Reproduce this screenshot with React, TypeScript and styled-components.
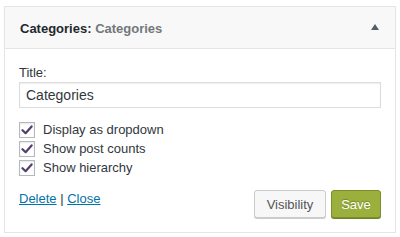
import {FC} from "react";
import styled, {createGlobalStyle} from "styled-components";

const GlobalStyle = createGlobalStyle`
	body {
		margin: 0;
		background: #ffffff;
		font-family: "Liberation Sans", Arial, sans-serif;
		color: #32373c;
	}
`;

const Widget = styled.div`
	box-sizing: border-box;
	width: 392px;
	height: 227px;
	margin: 6px 0 0 4px;
	border: 1px solid #e5e5e5;
	background: #ffffff;
	box-shadow: 0 1px 1px rgba(0, 0, 0, 0.04);
	display: flex;
	flex-direction: column;
`;

const Header = styled.div`
	height: 41px;
	border-bottom: 1px solid #e5e5e5;
	background: #f8f8f8;
	display: flex;
	align-items: center;
	justify-content: space-between;
	padding: 0 16px 0 15px;
`;

const HeaderTitle = styled.h3`
	margin: 0;
	font-size: 13px;
	font-weight: 700;
	color: #23282d;
	padding-top: 1px;

	span {
		color: #72777c;
		font-weight: 700;
	}
`;

const Toggle = styled.span`
	width: 0;
	height: 0;
	border-left: 4px solid transparent;
	border-right: 4px solid transparent;
	border-bottom: 6px solid #555d66;
	margin-top: -1px;
`;

const Body = styled.div`
	flex: 1;
	padding: 15px 14px 14px;
	display: flex;
	flex-direction: column;
`;

const Label = styled.label`
	font-size: 13px;
	line-height: 17px;
	color: #32373c;
	margin-bottom: 1px;
`;

const TextInput = styled.input`
	box-sizing: border-box;
	width: 100%;
	height: 26px;
	border: 1px solid #ddd;
	box-shadow: inset 0 1px 2px rgba(0, 0, 0, 0.07);
	padding: 0 6px;
	font-family: "Liberation Sans", Arial, sans-serif;
	font-size: 14px;
	color: #32373c;
	outline: none;
`;

const Options = styled.div`
	margin-top: 12px;
	display: flex;
	flex-direction: column;
`;

const OptionRow = styled.label`
	height: 19px;
	display: flex;
	align-items: center;
	font-size: 13px;
	color: #32373c;
	gap: 8px;
`;

const Box = styled.span`
	box-sizing: border-box;
	width: 16px;
	height: 16px;
	border: 1px solid #b4b9be;
	background: #ffffff;
	box-shadow: inset 0 1px 2px rgba(0, 0, 0, 0.1);
	display: flex;
	align-items: center;
	justify-content: center;
`;

const Footer = styled.div`
	margin-top: 13px;
	display: flex;
	justify-content: space-between;
	align-items: flex-start;
`;

const Links = styled.div`
	font-size: 13px;
	line-height: 18px;
	color: #32373c;
`;

const Link = styled.a`
	color: #0073aa;
	text-decoration: underline;
`;

const Actions = styled.div`
	display: flex;
	gap: 5px;
`;

const Button = styled.button<{$primary?: boolean; $width: number}>`
	box-sizing: border-box;
	width: ${(p) => p.$width}px;
	height: 28px;
	padding: 0;
	border-radius: 3px;
	font-family: "Liberation Sans", Arial, sans-serif;
	font-size: 13px;
	border: 1px solid ${(p) => (p.$primary ? "#7a8f2b" : "#cccccc")};
	background: ${(p) => (p.$primary ? "#9bb03c" : "#f7f7f7")};
	color: ${(p) => (p.$primary ? "#ffffff" : "#555555")};
	box-shadow: ${(p) =>
		p.$primary ? "0 1px 0 #6f8325" : "0 1px 0 #cccccc"};
	text-shadow: ${(p) => (p.$primary ? "0 -1px 1px #6f8325" : "none")};
`;

const Check: FC = () => (
	<svg width="12" height="10" viewBox="0 0 12 10">
		<path
			d="M1.5 5.2 L4.6 8.2 L10.6 1.4"
			fill="none"
			stroke="#523f6d"
			strokeWidth="2.2"
			strokeLinecap="round"
			strokeLinejoin="round"
		/>
	</svg>
);

const options = ["Display as dropdown", "Show post counts", "Show hierarchy"];

const App: FC = () => {
	return (
		<>
			<GlobalStyle />
			<Widget>
				<Header>
					<HeaderTitle>
						Categories: <span>Categories</span>
					</HeaderTitle>
					<Toggle />
				</Header>
				<Body>
					<Label>Title:</Label>
					<TextInput defaultValue="Categories" />
					<Options>
						{options.map((o) => (
							<OptionRow key={o}>
								<Box>
									<Check />
								</Box>
								{o}
							</OptionRow>
						))}
					</Options>
					<Footer>
						<Links>
							<Link href="#">Delete</Link> | <Link href="#">Close</Link>
						</Links>
						<Actions>
							<Button $width={72}>Visibility</Button>
							<Button $primary $width={50}>
								Save
							</Button>
						</Actions>
					</Footer>
				</Body>
			</Widget>
		</>
	);
};

export default App;
